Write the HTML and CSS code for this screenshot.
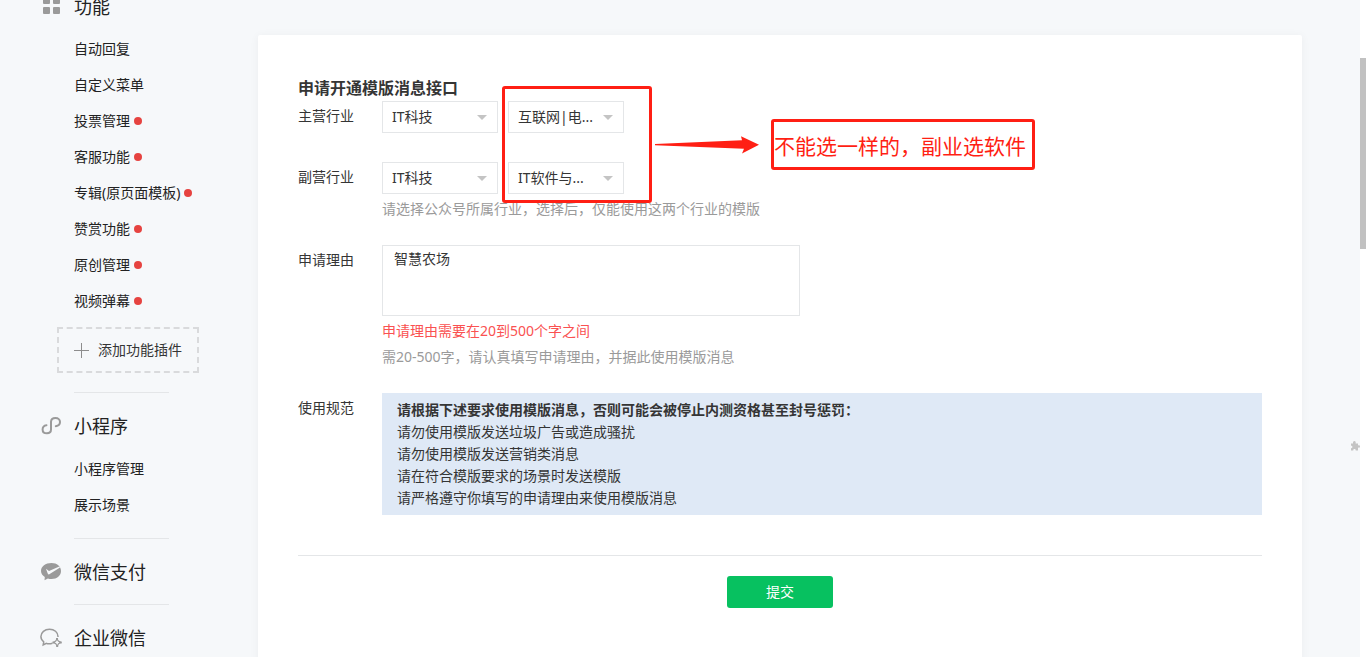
FILE: index.html
```html
<!DOCTYPE html>
<html lang="zh-CN">
<head>
  <meta charset="UTF-8">
  <meta name="viewport" content="width=device-width, initial-scale=1.0">
  <title>模版消息</title>
  <link rel="stylesheet" href="styles.css">
</head>
<body>
  <div class="page">
    <nav class="sidebar">
      <h2 class="menu-title">
        <svg class="menu-icon" width="22" height="20" viewBox="0 0 22 20" fill="#9a9a9a">
          <rect x="3" y="0" width="7" height="7" rx="1"/><rect x="13" y="0" width="7" height="7" rx="1"/>
          <rect x="3" y="10" width="7" height="7" rx="1"/><rect x="13" y="10" width="7" height="7" rx="1"/>
        </svg>
        功能
      </h2>
      <ul class="menu-list">
        <li><a href="#">自动回复</a></li>
        <li><a href="#">自定义菜单</a></li>
        <li><a href="#" class="new">投票管理</a></li>
        <li><a href="#" class="new">客服功能</a></li>
        <li><a href="#" class="new">专辑(原页面模板)</a></li>
        <li><a href="#" class="new">赞赏功能</a></li>
        <li><a href="#" class="new">原创管理</a></li>
        <li><a href="#" class="new">视频弹幕</a></li>
      </ul>
      <a href="#" class="add-plugin">
        <svg width="15" height="15" viewBox="0 0 15 15" stroke="#8d8d8d"><path d="M7.5 0v15M0 7.5h15"/></svg>
        添加功能插件
      </a>

      <h2 class="menu-title line">
        <svg class="menu-icon" width="22" height="20" viewBox="0 0 22 20" fill="none" stroke="#9a9a9a" stroke-width="2" stroke-linecap="round">
          <path d="M6.500 9.200C4.400 9.500 2.600 11 2.600 13.400C2.600 15.900 4.600 17.300 6.900 17.300C9.400 17.300 11 15.800 11 13.600V6C11 3.500 12.800 2 15.500 2C18.200 2 20 3.800 20 6C20 8.400 18.400 9.800 15.800 10.200"/>
        </svg>
        小程序
      </h2>
      <ul class="menu-list">
        <li><a href="#">小程序管理</a></li>
        <li><a href="#">展示场景</a></li>
      </ul>

      <h2 class="menu-title line">
        <svg class="menu-icon" width="22" height="20" viewBox="0 0 22 20">
          <path fill="#9a9a9a" d="M11.500 1C17 1 21 4.500 21 9C21 13.500 17 17 11.500 17C10.200 17 9 16.800 7.900 16.400L4.500 18.300L4.800 15C2.500 13.600 1 11.500 1 9C1 4.500 5.500 1 11.500 1Z"/>
          <path fill="#f6f8fa" d="M6 6.800L9 9L19.300 4.400L20 5.600L9.300 12.200C8.500 12.600 8 12.400 7.700 11.600Z"/>
        </svg>
        微信支付
      </h2>

      <h2 class="menu-title line">
        <svg class="menu-icon" width="22" height="20" viewBox="0 0 22 20" fill="none" stroke="#9a9a9a" stroke-width="1.500">
          <path d="M12.500 15.300C9.800 16 7.400 15.800 6.400 15.300L3.200 17L3.700 13.800C1.900 12.500 0.900 10.700 0.900 8.600C0.900 4.400 4.700 1.200 9.500 1.200C14.300 1.200 18 4.200 18 8.600V9"/>
          <path d="M17 11L18.400 13.100L20.700 14.400L18.600 15.800L17.200 18L15.800 15.800L13.600 14.500L15.700 13.100Z" stroke-width="1.200"/>
          <path d="M16 11h2M13.500 13.500v2M20.700 13.400v2M16.200 18h2" stroke-width="2"/>
        </svg>
        企业微信
      </h2>
    </nav>

    <main class="card">
      <h1 class="card-title">申请开通模版消息接口</h1>
      <form>
        <div class="industry">
          <div class="row">
            <label class="row-label" for="main1">主营行业</label>
            <div class="row-body selects">
              <span class="select"><select id="main1"><option>IT科技</option></select></span>
              <span class="select"><select id="main2" aria-label="主营行业"><option>互联网|电...</option></select></span>
            </div>
          </div>
          <div class="row">
            <label class="row-label" for="sub1">副营行业</label>
            <div class="row-body">
              <div class="selects">
                <span class="select"><select id="sub1"><option>IT科技</option></select></span>
                <span class="select"><select id="sub2" aria-label="副营行业"><option>IT软件与...</option></select></span>
              </div>
              <p class="tips">请选择公众号所属行业，选择后，仅能使用这两个行业的模版</p>
            </div>
          </div>
          <!-- 标注 -->
          <div class="mark-box"></div>
          <div class="mark-note">
            <svg width="104" height="18" viewBox="0 0 104 18" fill="#ff1f14"><path d="M0 8L87 4.300L86 0.300L104 8.800L87 17.500L89 12.800L0 9.300Z"/></svg>
            <span class="mark-text">不能选一样的，副业选软件</span>
          </div>
        </div>

        <div class="row">
          <label class="row-label" for="reason">申请理由</label>
          <div class="row-body">
            <textarea id="reason">智慧农场</textarea>
            <p class="tips error">申请理由需要在20到500个字之间</p>
            <p class="tips">需20-500字，请认真填写申请理由，并据此使用模版消息</p>
          </div>
        </div>

        <div class="row">
          <span class="row-label">使用规范</span>
          <div class="row-body rules">
            <strong>请根据下述要求使用模版消息，否则可能会被停止内测资格甚至封号惩罚：</strong>
            <p>请勿使用模版发送垃圾广告或造成骚扰</p>
            <p>请勿使用模版发送营销类消息</p>
            <p>请在符合模版要求的场景时发送模版</p>
            <p>请严格遵守你填写的申请理由来使用模版消息</p>
          </div>
        </div>

        <div class="actions">
          <button type="submit">提交</button>
        </div>
      </form>
    </main>

    <svg class="plugin" width="10" height="10" viewBox="0 0 10 10" fill="#c4c4c4"><path d="M1 2.500H3.100C2.700 0.900 3.400 0 4.400 0C5.500 0 6 1 5.600 2.500H8V4.400C9.300 4 10 4.600 10 5.500C10 6.400 9.300 7 8 6.600V9.500H5.700C5.900 8.500 5.300 8 4.500 8C3.700 8 3.100 8.500 3.300 9.500H1V7.200C1.900 7.300 2.400 6.700 2.400 6C2.400 5.300 1.900 4.700 1 4.800Z"/></svg>
    <div class="scrollbar"><div class="thumb"></div></div>
  </div>
</body>
</html>
```
FILE: styles.css
```css
* { box-sizing: border-box; }
body { margin: 0; font: 14px/22px "Noto Sans", "Noto Sans CJK SC", sans-serif; color: #353535; background: #f6f8fa; }
h1, h2, p, ul { margin: 0; padding: 0; }
a { color: inherit; text-decoration: none; }
.page { position: relative; display: flex; height: 100vh; overflow: hidden; }

/* 左侧菜单 */
.sidebar { flex: 0 0 258px; margin-top: -19px; color: #222; }
.menu-title { display: flex; align-items: center; gap: 12px; height: 50px; padding-left: 40px; font-size: 18px; font-weight: 400; position: relative; }
.menu-title:first-child { padding-top: 2px; }
.line { margin-top: 16px; }
.line::before { content: ""; position: absolute; left: 74px; top: -9px; width: 95px; height: 1px; background: #e4e6e8; }
.menu-list { list-style: none; margin-bottom: 8px; padding-left: 74px; line-height: 36px; }
.menu-list + .line { margin-top: 24px; }
.new { display: flex; align-items: center; gap: 4px; }
.new::after { content: ""; width: 8px; height: 8px; border-radius: 50%; background: #e64340; }
.add-plugin { display: flex; align-items: center; gap: 9px; width: 142px; height: 46px; margin-left: 57px; padding-left: 15px; border: 2px dashed #d9dadc; color: #353535; }
.add-plugin + .line { margin-top: 28px; }

/* 内容 */
.card { flex: 1; align-self: flex-start; min-height: 100vh; margin: 35px 58px 0 0; padding: 40px; background: #fff; border-radius: 2px; box-shadow: 0 1px 10px rgba(0,0,0,0.05); }
.card-title { font-size: 16px; line-height: 26px; font-weight: 700; }
.industry { position: relative; }
.row { display: flex; margin-bottom: 23px; }
.industry .row:first-child { margin-bottom: 29px; }
.row-label { flex: 0 0 84px; line-height: 30px; }
.row-body { flex: 1; min-width: 0; }
.selects { display: flex; gap: 10px; }
.select { position: relative; width: 116px; }
.select::after { content: ""; position: absolute; right: 11px; top: 14px; border: 5px solid transparent; border-top-color: #c4c4c4; border-bottom: 0; pointer-events: none; }
select { appearance: none; display: block; width: 100%; height: 32px; padding: 0 9px; border: 1px solid #e4e6e8; border-radius: 0; background: #fff; font: inherit; color: inherit; }
textarea { display: block; width: 418px; max-width: 100%; height: 71px; padding: 2px 11px; border: 1px solid #e4e6e8; resize: none; font: inherit; color: inherit; }
.tips { line-height: 26px; color: #9a9a9a; }
.selects + .tips, textarea + .tips { margin-top: 2px; }
.tips.error { color: #fa5151; }
.rules { padding: 6px 15px; background: #dfe9f6; }
.rules strong { display: block; }
.actions { margin-top: 40px; padding-top: 20px; border-top: 1px solid #e4e6e8; text-align: center; }
button { width: 106px; height: 32px; border: 0; border-radius: 3px; background: #07c160; color: #fff; font: inherit; }

.mark-box { position: absolute; left: 204px; top: -15px; width: 150px; height: 117px; border: 3px solid #ff1f14; border-radius: 3px; pointer-events: none; }
.mark-note { position: absolute; left: 357px; top: 18px; display: flex; align-items: center; gap: 12px; }
.mark-text { height: 51px; width: 264px; border: 3px solid #ff1f14; border-radius: 3px; color: #ff1f14; font-size: 21px; line-height: 48px; white-space: nowrap; }

.plugin { position: absolute; right: 6px; top: 441px; }
.scrollbar { flex: 0 0 6px; padding-top: 58px; background: #fff; }
.thumb { height: 191px; background: #c1c1c1; }
```
